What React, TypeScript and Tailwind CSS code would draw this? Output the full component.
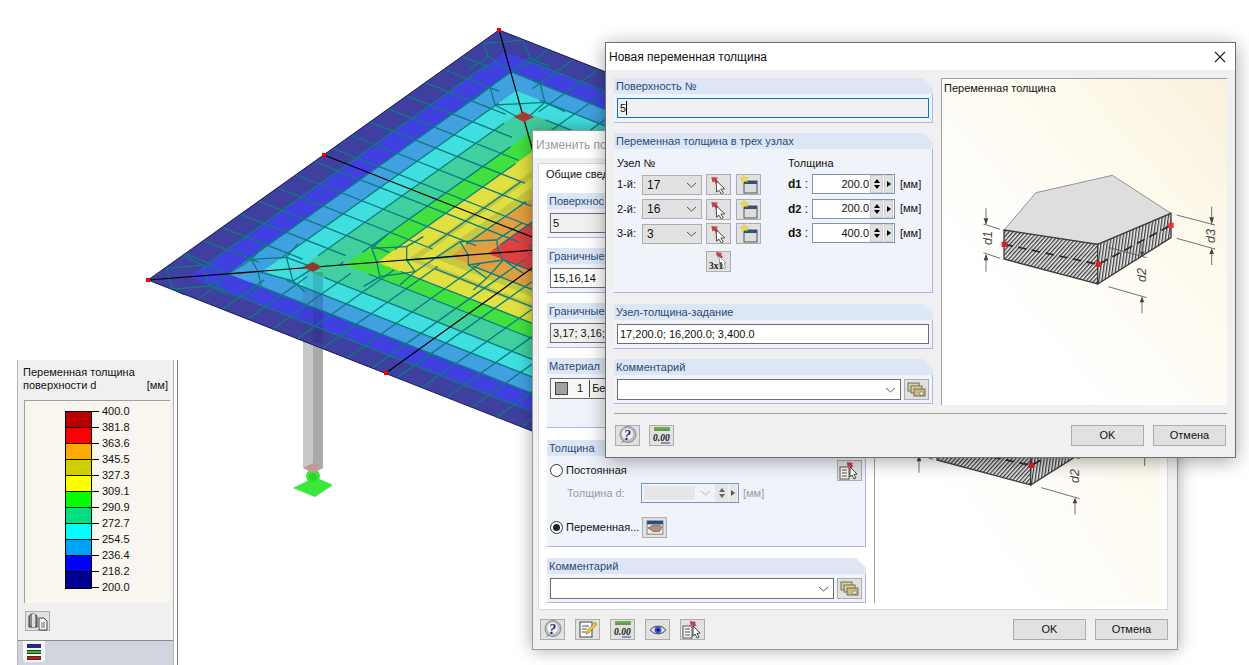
import React from 'react';

type Pt = [number, number];

// plate corners, hidden ones sit behind the dialogs
const L: Pt = [148, 280];
const T: Pt = [499, 30];
const R: Pt = [972, 216];
const B: Pt = [621, 466];
const C: Pt = [560, 248];
const corners = [L, T, R, B];

const bands: [number, string][] = [
  [1, '#3f3f9f'],
  [0.9, '#4040e0'],
  [0.806, '#40a0e0'],
  [0.721, '#40dfdf'],
  [0.63, '#40d0a0'],
  [0.522, '#40e040'],
  [0.444, '#e0e040'],
  [0.37, '#c8c840'],
  [0.345, '#e0e040'],
  [0.308, '#c8c840'],
  [0.267, '#e0a040'],
  [0.175, '#e04040'],
  [0.06, '#b03030'],
];

const scaled = (p: Pt, s: number): Pt => [C[0] + (p[0] - C[0]) * s, C[1] + (p[1] - C[1]) * s];

function meshLines() {
  const out: string[] = [];
  const levels = [0.9, 0.806, 0.721, 0.63, 0.522, 0.444, 0.36, 0.27, 0.175, 0.09];
  const n = 19;
  corners.forEach((a, idx) => {
    const b = corners[(idx + 1) % 4];
    const at = (u: number, v: number) =>
      `${C[0] + (a[0] - C[0]) * u + (b[0] - C[0]) * v},${C[1] + (a[1] - C[1]) * u + (b[1] - C[1]) * v}`;
    // rings, left open at the diagonals where the cells go irregular
    levels.forEach((s) => {
      const gap = Math.min(0.05, s * 0.2);
      out.push(`${at(s - gap, gap)} ${at(gap, s - gap)}`);
    });
    // cross lines, parallel to the plate sides
    for (let i = 2; i < n - 1; i++) {
      const t = i / n;
      const k = Math.min(t, 1 - t) - 0.04;
      out.push(`${at(1 - t, t)} ${at(1 - t - k, t - k)}`);
    }
  });
  return out;
}

// irregular cells along the diagonals, traced from the 3x crops
const toReal = (ox: number, oy: number, seg: number[]) =>
  `${ox + seg[0] / 3},${oy + seg[1] / 3} ${ox + seg[2] / 3},${oy + seg[3] / 3}`;

const leftCells = [
  [55, 205, 75, 267], [55, 205, 165, 195], [75, 267, 185, 258], [165, 195, 183, 258], [165, 195, 240, 222],
  [185, 258, 240, 222], [240, 222, 310, 178], [240, 222, 330, 215], [310, 178, 330, 215], [330, 215, 340, 260],
  [340, 260, 310, 285], [310, 178, 415, 172], [330, 215, 435, 243], [415, 172, 435, 243], [415, 172, 490, 200],
  [435, 243, 495, 205], [310, 178, 350, 135], [415, 172, 450, 130], [435, 243, 470, 275], [105, 165, 165, 195],
  [75, 267, 110, 285], [185, 258, 240, 285],
].map((s) => toReal(148, 200, s));

const midCells = [
  [0, 225, 10, 215], [95, 175, 110, 215], [110, 215, 120, 260], [95, 175, 200, 170], [200, 170, 200, 210],
  [200, 210, 225, 245], [120, 260, 225, 245], [225, 245, 285, 205], [200, 210, 285, 205], [285, 205, 360, 155],
  [360, 155, 385, 195], [385, 195, 385, 225], [285, 205, 385, 195], [385, 225, 440, 265], [360, 155, 470, 150],
  [470, 150, 475, 185], [475, 185, 490, 210], [490, 210, 440, 265], [385, 225, 490, 210], [95, 175, 140, 135],
  [200, 170, 250, 140], [120, 260, 70, 290], [225, 245, 180, 285], [440, 265, 400, 300], [470, 150, 545, 100],
  [490, 210, 550, 250],
].map((s) => toReal(340, 190, s));

const topCells = [
  [130, 55, 145, 95], [250, 45, 270, 100], [145, 95, 215, 140], [270, 100, 215, 140], [215, 140, 150, 185],
  [215, 140, 300, 175], [150, 185, 165, 240], [300, 175, 315, 232], [165, 240, 315, 232], [165, 240, 250, 285],
  [315, 232, 255, 285], [130, 55, 250, 45], [145, 95, 90, 130], [270, 100, 330, 125], [150, 185, 100, 225],
  [300, 175, 360, 200], [315, 232, 375, 260],
].map((s) => toReal(440, 25, s));

function Model() {
  return (
    <svg className="absolute left-0 top-0" width="1249" height="665" viewBox="0 0 1249 665">
      {/* column */}
      <rect x="303" y="340" width="10" height="128" fill="#c8c8c8" />
      <rect x="313" y="340" width="10" height="128" fill="#a9a9a9" />
      <polygon points="293,488 315,477 333,485 315,497" fill="#3ce63c" />
      <circle cx="313" cy="476" r="7" fill="#38e838" />
      <circle cx="313" cy="477" r="4" fill="#2ed42e" />
      <polygon points="303,468 313,463 323,468 313,473" fill="#c09a9a" />
      {bands.map(([s, col]) => (
        <polygon key={s} points={corners.map((c) => scaled(c, s).join(',')).join(' ')} fill={col} />
      ))}
      {/* column seen through the plate */}
      <rect x="303" y="272" width="10" height="71" fill="#303060" opacity="0.1" />
      <rect x="313" y="272" width="10" height="71" fill="#101040" opacity="0.18" />
      {[...meshLines(), ...leftCells, ...midCells, ...topCells].map((p, i) => (
        <polyline key={i} points={p} fill="none" stroke="#0c7a80" strokeWidth="1.3" />
      ))}
      <polygon points={corners.map((c) => c.join(',')).join(' ')} fill="none" stroke="#1a1a50" strokeWidth="1" />
      <line x1="148" y1="280" x2="560" y2="248" stroke="#000" strokeWidth="1.2" />
      <line x1="499" y1="30" x2="560" y2="248" stroke="#000" strokeWidth="1.2" />
      <line x1="324" y1="155" x2="560" y2="248" stroke="#000" strokeWidth="1.2" />
      <line x1="386" y1="373" x2="560" y2="248" stroke="#000" strokeWidth="1.2" />
      <polygon points="303,267 313,262 322,267 313,272" fill="#8f3a3a" />
      <polygon points="514,117 524,112 534,117 524,122" fill="#b03636" />
      {[L, T, [324, 155] as Pt, [386, 373] as Pt].map((p, i) => (
        <rect key={i} x={p[0] - 2} y={p[1] - 2} width="4" height="4" fill="#f00000" />
      ))}
    </svg>
  );
}

// ---- small icons ----
const PinCursor = () => (
  <svg width="19" height="19" viewBox="0 0 19 20">
    <path d="M2 2l7 1-1.5 2 2.5 3-3 2-2-3.5L3 8z" fill="#c4404c" />
    <path d="M7 6l9 8.5-4 .5 2.5 3.5-2 1.5-2.5-4L7.500 18z" fill="#fff" stroke="#2a2a2a" strokeWidth="0.9" />
  </svg>
);
const NewWindow = () => (
  <svg width="19" height="19" viewBox="0 0 19 19">
    <rect x="5" y="6" width="13" height="12" fill="#dcdcdc" stroke="#555" />
    <rect x="5" y="6" width="13" height="3" fill="#2f4f7f" />
    <path d="M5 0l1.200 3 3-.6-2 2.200 1.600 2.600-3-1-2 2 .2-3-3-1.400 3-.6z" fill="#f5e82a" stroke="#b8a820" strokeWidth="0.4" />
  </svg>
);
const ThreeByOne = () => (
  <svg width="22" height="19" viewBox="0 0 22 19">
    <path d="M8 0l6 1-1 1.500 2 2.500-3 2-2-3-1 1z" fill="#c4404c" />
    <path d="M11 4l7 7-2 .5 2 4-2 1-2-4-2 2z" fill="#fff" stroke="#777" strokeWidth="0.7" />
    <text x="1" y="17" fontSize="9.500" fontWeight="700" fontFamily="Liberation Serif, serif" fill="#222">3x1</text>
  </svg>
);
const Help = () => (
  <svg width="20" height="19" viewBox="0 0 20 19">
    <path d="M3 17l2-4 4 2z" fill="#9a9aa4" />
    <circle cx="10" cy="8.500" r="8" fill="#bcbcc6" stroke="#8a8a8a" />
    <circle cx="9.500" cy="8" r="5.500" fill="#f0f0f6" />
    <text x="6" y="14" fontSize="14" fontWeight="700" fontStyle="italic" fontFamily="Liberation Serif, serif" fill="#1a2a6a">?</text>
  </svg>
);
const Zero = () => (
  <svg width="19" height="19" viewBox="0 0 19 19">
    <rect x="2" y="1" width="16" height="4" fill="#6fae4f" />
    <path d="M4 3v2M7 3v2M10 3v2M13 3v2M16 3v2" stroke="#2f6f2f" strokeWidth="0.7" />
    <text x="1" y="15" fontSize="9.500" fontWeight="700" fontStyle="italic" fontFamily="Liberation Serif, serif" fill="#111">0.00</text>
    <line x1="9" y1="17" x2="18" y2="17" stroke="#3a3a9a" />
  </svg>
);
const Stack = () => (
  <svg width="19" height="17" viewBox="0 0 19 17">
    <rect x="1" y="2" width="11" height="8" fill="#d9cf9c" stroke="#6f6f5f" />
    <rect x="4" y="5" width="11" height="7" fill="#d9cf9c" stroke="#6f6f5f" />
    <rect x="7" y="8" width="11" height="7" fill="#c9bb7f" stroke="#6f6f5f" />
    <rect x="13" y="11" width="3" height="3" fill="#fff" stroke="#555" strokeWidth="0.5" />
  </svg>
);
const ListCursor = () => (
  <svg width="21" height="19" viewBox="0 0 21 19">
    <rect x="1" y="6" width="9" height="12" fill="#f4f4f4" stroke="#555" />
    <path d="M3 9h5M3 12h5M3 15h5" stroke="#555" />
    <path d="M8 1l6 1-1 1.500 1.500 2-3 1.500-1-2-2 1z" fill="#c4404c" />
    <path d="M11 6l7 7-3 .5 2 3.500-2 1-2-4-2 2z" fill="#fff" stroke="#333" strokeWidth="0.9" />
  </svg>
);
const Pencil = () => (
  <svg width="20" height="19" viewBox="0 0 20 19">
    <rect x="2" y="2" width="12" height="15" fill="#fbfbfb" stroke="#444" />
    <path d="M4 6h7M4 9h5M4 12h4" stroke="#555" />
    <path d="M17 2l2 2-8 9-3 1 1-3z" fill="#f0c830" stroke="#7a6a20" strokeWidth="0.6" />
  </svg>
);
const Eye = () => (
  <svg width="18" height="12" viewBox="0 0 20 14">
    <path d="M1 7c4-6 14-6 18 0-4 6-14 6-18 0z" fill="#dfe4f4" stroke="#222" />
    <circle cx="10" cy="7" r="4" fill="#3a55c8" />
    <circle cx="10" cy="7" r="1.600" fill="#10103a" />
  </svg>
);
const Hand = () => (
  <svg width="18" height="15" viewBox="0 0 20 17">
    <rect x="1" y="1" width="18" height="15" fill="#e8eef8" stroke="#777" />
    <rect x="1" y="1" width="18" height="4" fill="#2a4f7f" />
    <path d="M2 9l6-3h7l3 2-3 5H8z" fill="#b89078" stroke="#4a3020" strokeWidth="0.6" />
  </svg>
);
const CopyFile = () => (
  <svg width="22" height="19" viewBox="0 0 22 19">
    <path d="M2 15V5c0-4 8-4 8 0v10z" fill="#8a8a8a" stroke="#333" />
    <rect x="5" y="2" width="3" height="13" fill="#dedede" />
    <path d="M12 6h5l3 3v9h-8z" fill="#f5f5f5" stroke="#444" />
    <path d="M14 11h4M14 13h4M14 15h4" stroke="#444" strokeWidth="0.8" />
  </svg>
);
const Chevron = () => (
  <svg width="11" height="6" viewBox="0 0 11 6" className="shrink-0">
    <path d="M1 1l4.500 4L10 1" fill="none" stroke="#555" strokeWidth="1" />
  </svg>
);

// ---- dialog widgets ----
function IconBtn({ children }: { children?: React.ReactNode }) {
  return (
    <div className="w-[25px] h-[21px] shrink-0 flex items-center justify-center bg-[#e1e1e1] border border-[#adadad]">
      {children}
    </div>
  );
}

function Section({ title, bodyH, children, className = '' }: { title: string; bodyH: number; children?: React.ReactNode; className?: string }) {
  return (
    <div className={`w-[319px] flex flex-col shrink-0 ${className}`}>
      <div className="h-[16px] bg-[#dce6f4] text-[#2b4a78] text-[11px] leading-[16px] pl-[2px] [clip-path:polygon(0_0,calc(100%-10px)_0,100%_10px,100%_100%,0_100%)]">
        {title}
      </div>
      <div
        className="bg-[#f0f4fa] border-r border-b border-[#b0b4e8] px-[3px] pt-[4px]"
        style={{ height: bodyH }}
      >
        {children}
      </div>
    </div>
  );
}

function Field({ value, bg = 'bg-white', border = 'border-[#6e6e6e]', caret = false }: { value: string; bg?: string; border?: string; caret?: boolean }) {
  return (
    <div className={`h-[20px] border ${border} ${bg} px-[2px] text-[11px] leading-[18px] text-[#111] flex items-center whitespace-nowrap overflow-hidden`}>
      {value}
      {caret && <span className="w-px h-[14px] bg-black" />}
    </div>
  );
}

function CommentRow() {
  return (
    <div className="flex gap-[3px]">
      <div className="w-[284px] h-[21px] border border-[#6e6e6e] bg-white flex items-center justify-end pr-[4px]">
        <Chevron />
      </div>
      <IconBtn>
        <Stack />
      </IconBtn>
    </div>
  );
}

function Spin({ value }: { value: string }) {
  return (
    <div className="w-[83px] h-[20px] border border-[#7a96b4] bg-white flex items-center text-[11px] text-[#111]">
      <span className="flex-1 text-right pr-[1px]">{value}</span>
      <div className="w-[13px] h-[18px] bg-[#e1e1e1] border border-[#cfcfcf] flex flex-col items-center justify-center gap-[2px]">
        <div className="w-0 h-0 border-x-[3px] border-x-transparent border-b-[4px] border-b-black" />
        <div className="w-0 h-0 border-x-[3px] border-x-transparent border-t-[4px] border-t-black" />
      </div>
      <div className="w-[9px] h-[18px] ml-px mr-px bg-[#e1e1e1] border border-[#cfcfcf] flex items-center justify-center">
        <div className="w-0 h-0 border-y-[3px] border-y-transparent border-l-[4px] border-l-black" />
      </div>
    </div>
  );
}

const rows = [
  { label: '1-й:', node: '17', sub: '1', val: '200.0' },
  { label: '2-й:', node: '16', sub: '2', val: '200.0' },
  { label: '3-й:', node: '3', sub: '3', val: '400.0' },
];

function DiagramSvg({ className, id }: { className: string; id: string }) {
  // coordinates taken from the 3x crop, so scaled by a third
  return (
    <svg className={className} width="286" height="327" viewBox="3 24 858 981">
      <defs>
        <pattern id={`${id}a`} width="9" height="9" patternUnits="userSpaceOnUse" patternTransform="rotate(42)">
          <rect width="9" height="9" fill="#f0f0f0" />
          <rect width="4" height="9" fill="#3c3c3c" />
        </pattern>
        <pattern id={`${id}b`} width="9" height="9" patternUnits="userSpaceOnUse" patternTransform="rotate(8)">
          <rect width="9" height="9" fill="#f0f0f0" />
          <rect width="4" height="9" fill="#3c3c3c" />
        </pattern>
      </defs>
      <polygon points="192,480 288,368 517,316 693,430 473,523" fill="#dedede" stroke="#666675" strokeWidth="2" />
      <polygon points="192,480 473,523 473,642 192,567" fill={`url(#${id}a)`} stroke="#3c3c3c" strokeWidth="4" />
      <polygon points="473,523 693,430 693,503 473,642" fill={`url(#${id}b)`} stroke="#3c3c3c" strokeWidth="4" />
      <polyline points="193,523 475,583 692,466" fill="none" stroke="#2a2a2a" strokeWidth="5" strokeDasharray="26 16" />
      <g stroke="#555" strokeWidth="2.500" fill="none">
        <path d="M130 462L180 478M130 548L180 565M138 415V462M138 605V555" />
        <path d="M710 435L825 465M710 505L825 537M815 410V465M815 585V537" />
        <path d="M505 532L620 563M505 650L620 683M606 520V560M606 730V683" />
      </g>
      <g fill="#444">
        <path d="M131 445h14l-7 19zM131 571h14l-7-19zM808 442h14l-7 21zM808 552h14l-7-17zM599 545h14l-7 17zM599 697h14l-7-17z" />
      </g>
      <g fontFamily="Liberation Sans, sans-serif" fontStyle="italic" fontSize="38" fill="#444">
        <text transform="translate(155 525) rotate(-90)">d1</text>
        <text transform="translate(825 519) rotate(-90)">d3</text>
        <text transform="translate(618 636) rotate(-90)">d2</text>
      </g>
      <rect x="185" y="515" width="16" height="16" fill="#e02020" />
      <rect x="467" y="575" width="16" height="16" fill="#e02020" />
      <rect x="685" y="458" width="16" height="16" fill="#ee3030" />
    </svg>
  );
}

function OkCancel() {
  return (
    <div className="flex gap-[9px] text-[11px] text-[#111]">
      <div className="w-[73px] h-[21px] bg-[#e1e1e1] border border-[#adadad] flex items-center justify-center">OK</div>
      <div className="w-[73px] h-[21px] bg-[#e1e1e1] border border-[#adadad] flex items-center justify-center">Отмена</div>
    </div>
  );
}

function FrontDialog() {
  return (
    <div className="absolute left-[605px] top-[42px] w-[631px] h-[416px] bg-[#f0f0f0] border border-[#6e6e6e] flex flex-col shadow-[0_3px_18px_rgba(0,0,0,0.35)]">
      <div className="h-[27px] bg-white flex items-center justify-between pl-[3px] pr-[9px] text-[12px] text-[#111]">
        <span>Новая переменная толщина</span>
        <svg width="12" height="12" viewBox="0 0 12 12">
          <path d="M1 1l10 10M11 1L1 11" stroke="#222" strokeWidth="1.100" />
        </svg>
      </div>
      <div className="flex gap-[8px] pl-[8px] pt-[8px]">
        <div className="flex flex-col">
          <Section title="Поверхность №" bodyH={29}>
            <Field value="5" bg="bg-[#f0f0f0]" border="border-[#0078d7]" caret />
          </Section>
          <Section title="Переменная толщина в трех узлах" bodyH={144} className="mt-[10px]">
            <div className="flex text-[11px] text-[#111] pt-[3px]">
              <div className="w-[171px] flex flex-col">
                <div className="h-[14px] leading-[14px]">Узел №</div>
                <div className="flex flex-col gap-[3.500px] mt-[4px]">
                  {rows.map((r) => (
                    <div key={r.label} className="flex items-center h-[21px]">
                      <span className="w-[25px]">{r.label}</span>
                      <div className="w-[60px] h-[20px] bg-[#e1e1e1] border border-[#adadad] flex items-center justify-between px-[4px] mr-[4px] text-[12px]">
                        {r.node}
                        <Chevron />
                      </div>
                      <IconBtn>
                        <PinCursor />
                      </IconBtn>
                      <div className="w-[5px]" />
                      <IconBtn>
                        <NewWindow />
                      </IconBtn>
                    </div>
                  ))}
                </div>
                <div className="ml-[89px] mt-[7px]">
                  <IconBtn>
                    <ThreeByOne />
                  </IconBtn>
                </div>
              </div>
              <div className="flex flex-col">
                <div className="h-[14px] leading-[14px]">Толщина</div>
                <div className="flex flex-col gap-[4.500px] mt-[4px]">
                  {rows.map((r) => (
                    <div key={r.label} className="flex items-center h-[20px]">
                      <span className="w-[24px] font-bold text-[12px]">
                        d<span className="text-[11px]">{r.sub}</span> <span className="font-normal">:</span>
                      </span>
                      <Spin value={r.val} />
                      <span className="ml-[5px]">[мм]</span>
                    </div>
                  ))}
                </div>
              </div>
            </div>
          </Section>
          <Section title="Узел-толщина-задание" bodyH={29} className="mt-[11px]">
            <Field value="17,200.0; 16,200.0; 3,400.0" />
          </Section>
          <Section title="Комментарий" bodyH={29} className="mt-[10px]">
            <CommentRow />
          </Section>
        </div>
        <div className="relative w-[286px] h-[327px] bg-linear-to-tr from-white from-25% via-[#fdf9ec] via-70% to-[#f8f1dc] border-t border-l border-[#a0a0a0]">
          <DiagramSvg id="front" className="absolute -left-px -top-px" />
          <div className="relative pl-[2px] pt-[2px] text-[11px] leading-[14px] text-[#111]">Переменная толщина</div>
        </div>
      </div>
      <div className="h-px bg-[#a0a0a0] ml-[8px] mr-[8px] mt-[8px]" />
      <div className="flex items-center justify-between pl-[9px] pr-[9px] mt-[11px]">
        <div className="flex gap-[9px]">
          <IconBtn>
            <Help />
          </IconBtn>
          <IconBtn>
            <Zero />
          </IconBtn>
        </div>
        <OkCancel />
      </div>
    </div>
  );
}

function RearDialog() {
  return (
    <div className="absolute left-[532px] top-[130px] w-[646px] h-[520px] bg-[#f0f0f0] border border-[#9a9a9a] flex flex-col shadow-[0_0_16px_rgba(0,0,0,0.35)]">
      <div className="h-[27px] bg-white flex items-center pl-[3px] text-[12px] text-[#9a9a9a]">Изменить по</div>
      <div className="mx-[5px] mt-[5px] w-[630px] h-[447px] bg-white border border-[#d9d9d9] flex flex-col">
        <div className="h-[21px] pl-[7px] pt-[2px] text-[11px] text-[#111]">Общие свед</div>
        <div className="flex gap-[8px] pl-[8px] pt-[8px]">
          <div className="flex flex-col">
            <Section title="Поверхнос" bodyH={29}>
              <Field value="5" bg="bg-[#f0f0f0]" />
            </Section>
            <Section title="Граничные" bodyH={29} className="mt-[10px]">
              <Field value="15,16,14" />
            </Section>
            <Section title="Граничные" bodyH={29} className="mt-[10px]">
              <Field value="3,17; 3,16;" bg="bg-[#f0f0f0]" />
            </Section>
            <Section title="Материал" bodyH={54} className="mt-[10px]">
              <div className="h-[21px] border border-[#6e6e6e] bg-[#f7f7f7] flex items-center text-[11px] text-[#111] pl-[4px]">
                <span className="w-[13px] h-[13px] bg-[#a0a0a0] border border-[#444]" />
                <span className="ml-[9px] pr-[6px] border-r border-[#444]">1</span>
                <span className="ml-[2px]">Бе</span>
              </div>
            </Section>
            <Section title="Толщина" bodyH={91} className="mt-[12px]">
              <div className="flex flex-col text-[11px] text-[#111] relative">
                <div className="flex items-center justify-between h-[21px]">
                  <div className="flex items-center gap-[3px]">
                    <span className="w-[13px] h-[13px] rounded-full border border-[#333] bg-white" />
                    Постоянная
                  </div>
                  <IconBtn>
                    <ListCursor />
                  </IconBtn>
                </div>
                <div className="flex items-center h-[20px] mt-[2px] pl-[17px] text-[#9a9a9a]">
                  <span className="w-[74px]">Толщина d:</span>
                  <div className="w-[98px] h-[20px] border border-[#7a96b4] flex items-center pl-[2px]">
                    <div className="w-[51px] h-[14px] bg-[#e6e6e6]" />
                    <div className="w-[20px] flex justify-center opacity-40">
                      <Chevron />
                    </div>
                    <div className="w-[13px] h-[18px] bg-[#e6e6e6] flex flex-col items-center justify-center gap-[2px]">
                      <div className="w-0 h-0 border-x-[3px] border-x-transparent border-b-[4px] border-b-[#666]" />
                      <div className="w-0 h-0 border-x-[3px] border-x-transparent border-t-[4px] border-t-[#666]" />
                    </div>
                    <div className="w-[8px] h-[18px] ml-px bg-[#e6e6e6] flex items-center justify-center">
                      <div className="w-0 h-0 border-y-[3px] border-y-transparent border-l-[4px] border-l-[#555]" />
                    </div>
                  </div>
                  <span className="ml-[4px]">[мм]</span>
                </div>
                <div className="flex items-center h-[21px] mt-[14px]">
                  <span className="w-[13px] h-[13px] rounded-full border border-[#333] bg-white flex items-center justify-center">
                    <span className="w-[7px] h-[7px] rounded-full bg-[#222]" />
                  </span>
                  <span className="w-[76px] ml-[3px]">Переменная...</span>
                  <IconBtn>
                    <Hand />
                  </IconBtn>
                </div>
              </div>
            </Section>
            <Section title="Комментарий" bodyH={29} className="mt-[11px]">
              <CommentRow />
            </Section>
          </div>
          <div className="w-px h-[411px] bg-[#a0a0a0] -mt-px" />
          <div className="relative -ml-[8px] w-[285px] h-[411px] overflow-hidden bg-linear-to-tr from-white from-25% via-[#fdf9ec] via-70% to-[#f8f1dc]">
            <DiagramSvg id="rear" className="absolute left-[-1px] top-[86px]" />
          </div>
        </div>
      </div>
      <div className="flex items-center justify-between pl-[7px] pr-[9px] mt-[9px]">
        <div className="flex gap-[10px]">
          <IconBtn>
            <Help />
          </IconBtn>
          <IconBtn>
            <Pencil />
          </IconBtn>
          <IconBtn>
            <Zero />
          </IconBtn>
          <IconBtn>
            <Eye />
          </IconBtn>
          <IconBtn>
            <ListCursor />
          </IconBtn>
        </div>
        <OkCancel />
      </div>
    </div>
  );
}

const legendColors = ['#b80000', '#ff0000', '#ffaa00', '#d0d000', '#ffff00', '#00ff00', '#00e080', '#00ffff', '#00a0ff', '#0000ff', '#000090'];
const legendValues = ['400.0', '381.8', '363.6', '345.5', '327.3', '309.1', '290.9', '272.7', '254.5', '236.4', '218.2', '200.0'];

function Legend() {
  return (
    <div className="absolute left-[17px] top-[360px] w-[157px] h-[305px] bg-[#f0f0f0] border-x border-[#b4b4b4] flex flex-col text-[11px] text-[#111] shadow-[3px_0_0_#fff,4px_0_0_#777]">
      <div className="pl-[5px] pr-[5px] pt-[6px] h-[40px] leading-[13px]">
        <div>Переменная толщина</div>
        <div className="flex justify-between">
          <span>поверхности d</span>
          <span>[мм]</span>
        </div>
      </div>
      <div className="mx-[6px] w-[146px] h-[203px] bg-[#f9f6f0] border-t border-l border-[#a0a0a0] flex pl-[40px] pt-[10px]">
        <div className="w-[27px] h-[178px] border border-black flex flex-col">
          {legendColors.map((c) => (
            <div key={c} className="h-[16px] border-b border-black last:border-b-0 shrink-0" style={{ backgroundColor: c }} />
          ))}
        </div>
        <div className="flex flex-col -mt-[8px]">
          {legendValues.map((v) => (
            <div key={v} className="h-[16px] flex items-center shrink-0">
              <span className="w-[7px] h-px bg-black mr-[3px]" />
              <span className="leading-[16px]">{v}</span>
            </div>
          ))}
        </div>
      </div>
      <div className="ml-[7px] mt-[8px] w-[25px] h-[20px] bg-[#e1e1e1] border border-[#adadad] flex items-center justify-center">
        <CopyFile />
      </div>
      <div className="mt-[9px] flex-1 bg-[#d0d4dc] border-t border-[#8a8a8a] pl-[5px]">
        <div className="w-[22px] h-[21px] bg-[#f4f6f8] rounded-b-[3px] flex flex-col items-center justify-center gap-[2px]">
          <div className="w-[14px] h-[4px] bg-[#1a1ae0] border-y border-[#333]" />
          <div className="w-[14px] h-[4px] bg-[#10d010] border-y border-[#333]" />
          <div className="w-[14px] h-[4px] bg-[#e01010] border-y border-[#333]" />
        </div>
      </div>
    </div>
  );
}

export default function App() {
  return (
    <div className="relative w-[1249px] h-[665px] overflow-hidden bg-white font-['Liberation_Sans',sans-serif]">
      <Model />
      <Legend />
      <RearDialog />
      <FrontDialog />
    </div>
  );
}
